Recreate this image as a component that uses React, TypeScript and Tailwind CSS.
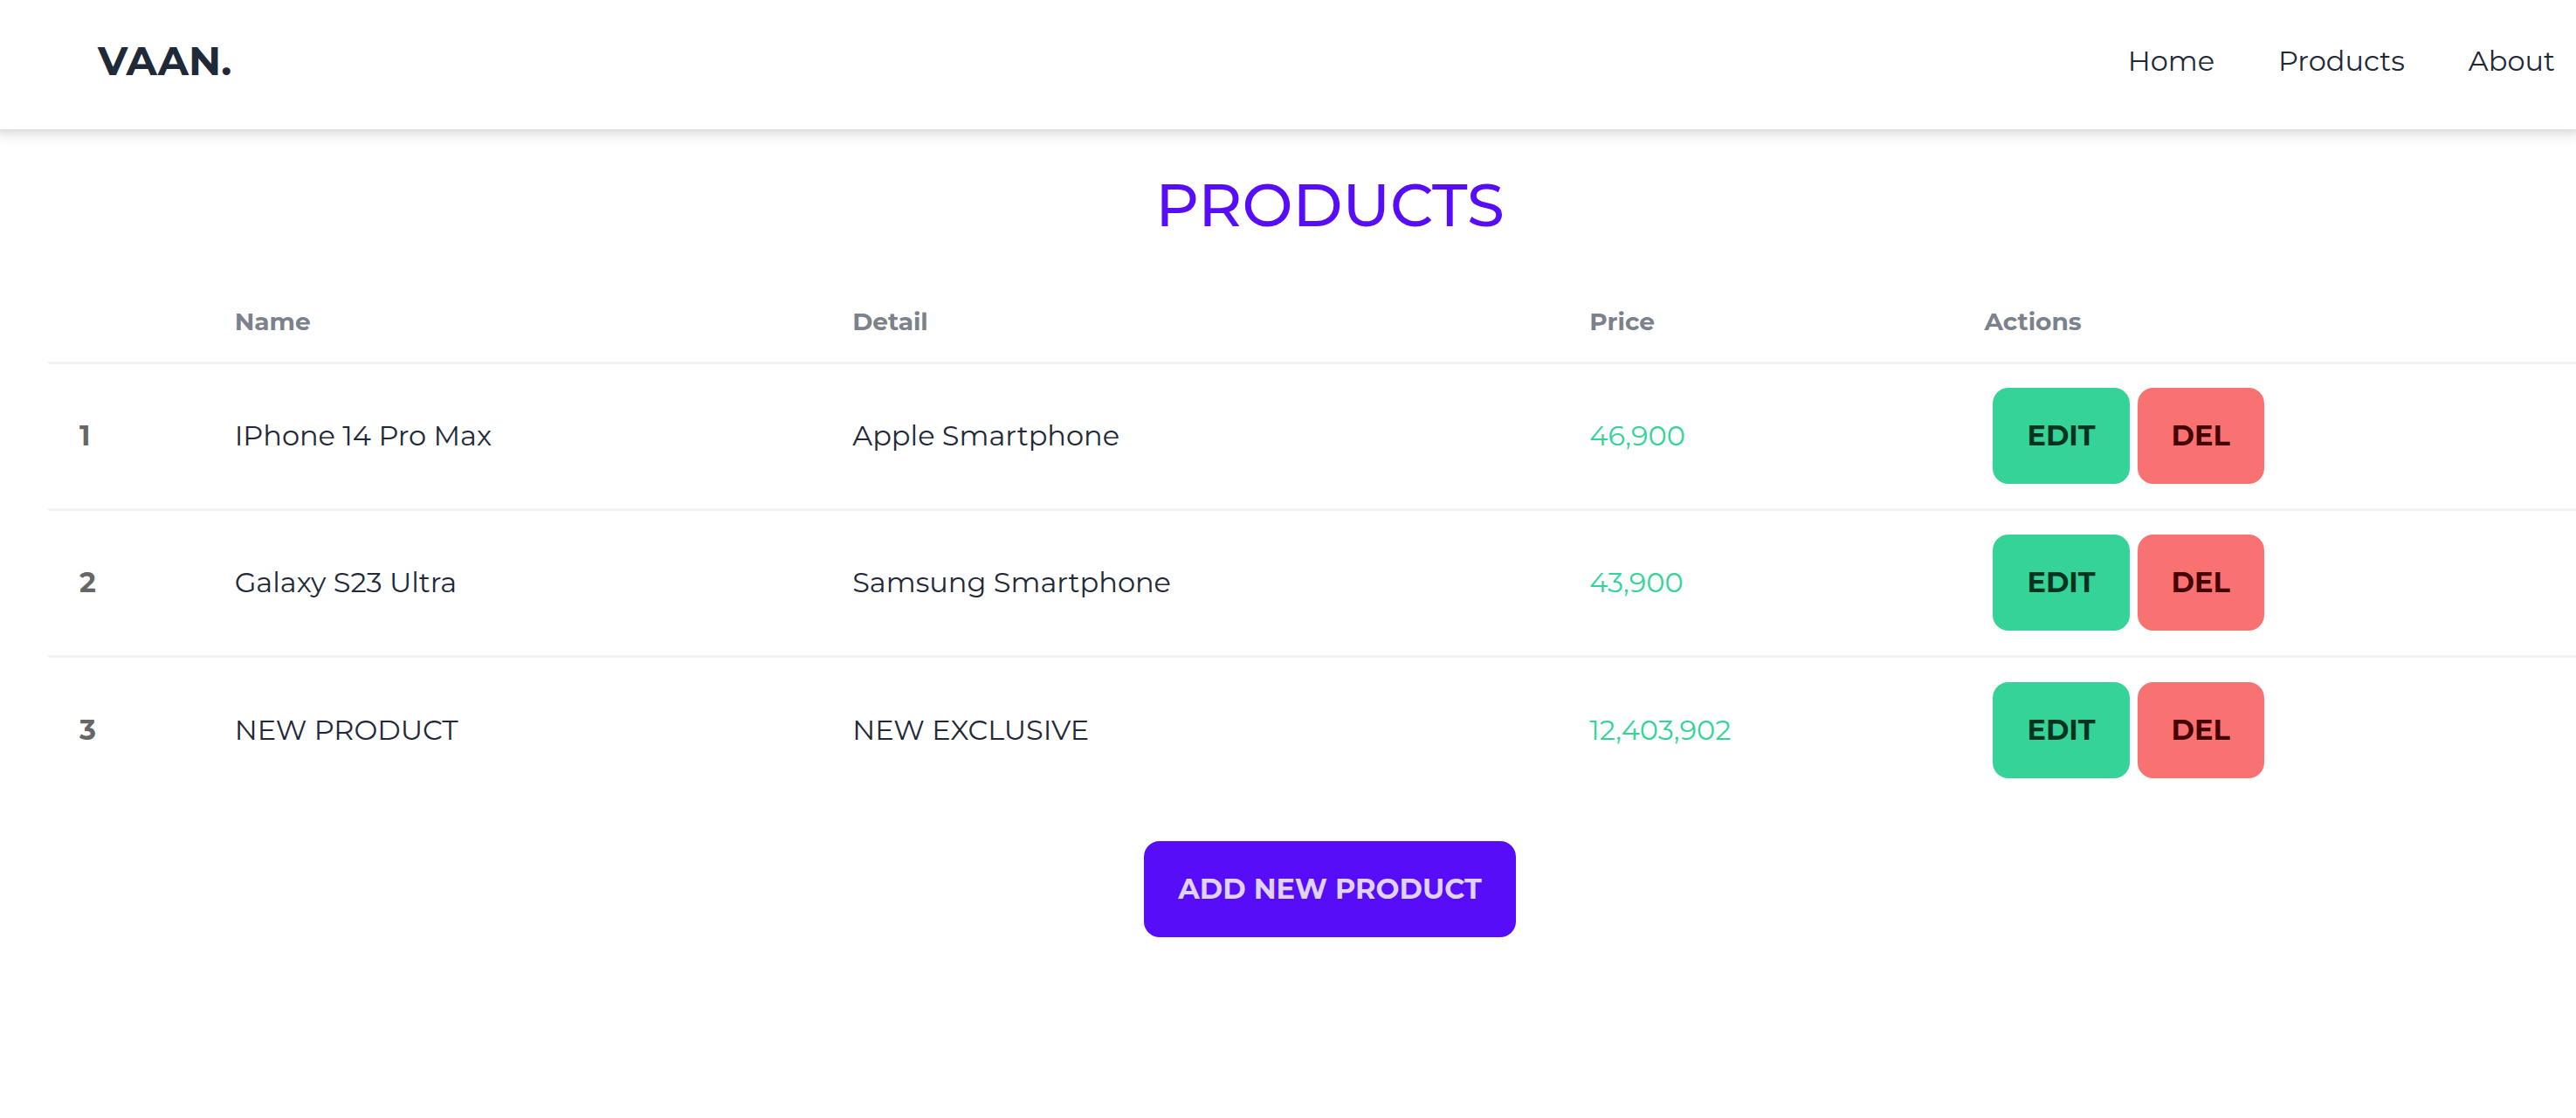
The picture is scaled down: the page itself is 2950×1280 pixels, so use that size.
import React from "react";

type Product = { id: number; name: string; detail: string; price: number };

const products: Product[] = [
  { id: 1, name: "IPhone 14 Pro Max", detail: "Apple Smartphone", price: 46900 },
  { id: 2, name: "Galaxy S23 Ultra", detail: "Samsung Smartphone", price: 43900 },
  { id: 3, name: "NEW PRODUCT", detail: "NEW EXCLUSIVE", price: 12403902 },
];

const links = ["Home", "Products", "About"];

function Navbar() {
  return (
    <header className="flex h-[148px] items-center justify-between bg-white pr-6 pb-2 pl-28 shadow-[0_0_14px_7px_rgb(0_0_0/0.1),0_-5px_9px_5px_rgb(0_0_0/0.1)]">
      <a href="#" className="text-[46px] leading-none font-bold">
        VAAN.
      </a>
      <nav className="flex gap-[73px]">
        {links.map((link) => (
          <a key={link} href="#" className="text-[32px] leading-none">
            {link}
          </a>
        ))}
      </nav>
    </header>
  );
}

function ProductTable() {
  return (
    <table className="mt-[46px] w-full table-fixed text-left">
      <colgroup>
        <col className="w-[6.05%]" />
        <col className="w-[24.1%]" />
        <col className="w-[28.75%]" />
        <col className="w-[15.4%]" />
        <col />
      </colgroup>
      <thead>
        <tr className="h-[93px] border-b-3 border-[#f2f2f2] text-[28px] text-[#7b828c]">
          <th className="px-9" aria-label="Number" />
          <th className="px-9 font-bold">Name</th>
          <th className="px-9 font-bold">Detail</th>
          <th className="px-9 font-bold">Price</th>
          <th className="px-9 font-bold">Actions</th>
        </tr>
      </thead>
      <tbody className="text-[32px] leading-none">
        {products.map((p) => (
          <tr key={p.id} className="h-[168px] border-b-3 border-[#f2f2f2] last:border-b-0">
            <th scope="row" className="px-9 font-bold text-[#666666]">
              {p.id}
            </th>
            <td className="px-9">{p.name}</td>
            <td className="px-9">{p.detail}</td>
            <td className="px-9 text-[#36d399]">{p.price.toLocaleString("en-US")}</td>
            <td className="px-9">
              <div className="flex gap-[9px] pl-[10px]">
                <button className="h-[110px] rounded-[18px] bg-[#36d399] px-[39px] font-bold text-[#003320]">
                  EDIT
                </button>
                <button className="h-[110px] rounded-[18px] bg-[#f87272] px-[39px] font-bold text-[#470000]">
                  DEL
                </button>
              </div>
            </td>
          </tr>
        ))}
      </tbody>
    </table>
  );
}

export default function App() {
  return (
    <div className="min-h-screen overflow-x-hidden bg-white font-[Montserrat,Inter,sans-serif] text-[#1f2937]">
      <Navbar />
      {/* The content runs past the right edge of the window. */}
      <main className="-mr-24 flex flex-col items-center px-[55px] pt-11">
        <h1 className="text-[69px] leading-[84px] font-medium text-[#570df8]">PRODUCTS</h1>
        <ProductTable />
        <button className="mt-11 h-[110px] rounded-[18px] bg-[#570df8] px-[39px] text-[32px] leading-none font-bold text-[#e0d2fe]">
          ADD NEW PRODUCT
        </button>
      </main>
    </div>
  );
}
